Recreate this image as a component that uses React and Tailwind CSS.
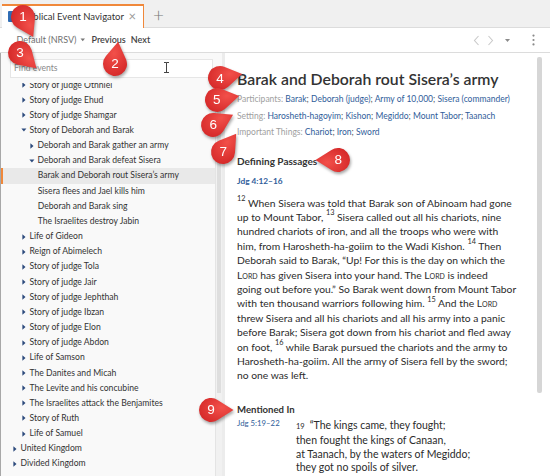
import React from "react";

const tree = [
  { t: "Story of judge Othniel", lvl: 1, a: "r" },
  { t: "Story of judge Ehud", lvl: 1, a: "r" },
  { t: "Story of judge Shamgar", lvl: 1, a: "r" },
  { t: "Story of Deborah and Barak", lvl: 1, a: "d" },
  { t: "Deborah and Barak gather an army", lvl: 2, a: "r" },
  { t: "Deborah and Barak defeat Sisera", lvl: 2, a: "d" },
  { t: "Barak and Deborah rout Sisera’s army", lvl: 3, sel: true },
  { t: "Sisera flees and Jael kills him", lvl: 3 },
  { t: "Deborah and Barak sing", lvl: 3 },
  { t: "The Israelites destroy Jabin", lvl: 3 },
  { t: "Life of Gideon", lvl: 1, a: "r" },
  { t: "Reign of Abimelech", lvl: 1, a: "r" },
  { t: "Story of judge Tola", lvl: 1, a: "r" },
  { t: "Story of judge Jair", lvl: 1, a: "r" },
  { t: "Story of judge Jephthah", lvl: 1, a: "r" },
  { t: "Story of judge Ibzan", lvl: 1, a: "r" },
  { t: "Story of judge Elon", lvl: 1, a: "r" },
  { t: "Story of judge Abdon", lvl: 1, a: "r" },
  { t: "Life of Samson", lvl: 1, a: "r" },
  { t: "The Danites and Micah", lvl: 1, a: "r" },
  { t: "The Levite and his concubine", lvl: 1, a: "r" },
  { t: "The Israelites attack the Benjamites", lvl: 1, a: "r" },
  { t: "Story of Ruth", lvl: 1, a: "r" },
  { t: "Life of Samuel", lvl: 1, a: "r" },
  { t: "United Kingdom", lvl: 0, a: "r" },
  { t: "Divided Kingdom", lvl: 0, a: "r" },
];

const indent = ["pl-[12px]", "pl-[21px]", "pl-[29px]", "pl-[36.7px]"];

const pins = [
  { n: 1, pos: "left-[-3px] top-[-9.5px]", rot: 153 },
  { n: 2, pos: "left-[89px] top-[38px]", rot: 8 },
  { n: 3, pos: "left-[-6px] top-[27px]", rot: 133 },
  { n: 4, pos: "left-[194px] top-[52.3px]", rot: 80 },
  { n: 5, pos: "left-[190.7px] top-[74px]", rot: 80 },
  { n: 6, pos: "left-[187.3px] top-[99px]", rot: 63 },
  { n: 7, pos: "left-[197.3px] top-[125.7px]", rot: 36 },
  { n: 8, pos: "left-[312.3px] top-[134px]", rot: 270 },
  { n: 9, pos: "left-[185px] top-[384px]", rot: 90 },
];

function Arrow({ dir }) {
  if (dir === "d")
    return (
      <svg width="6" height="4" viewBox="0 0 6 4" className="-ml-[1px]">
        <path d="M0.4 0.4 L5.4 0.4 L2.9 3.5z" fill="#2c4a7c" />
      </svg>
    );
  return (
    <svg width="4" height="6" viewBox="0 0 4 6">
      <path d="M0.4 0.3 L3.5 3 L0.4 5.7z" fill="#2c4a7c" />
    </svg>
  );
}

function Pin({ n, pos, rot }) {
  return (
    <div className={`absolute ${pos} w-[52px] h-[52px] drop-shadow-[1px_2px_1.5px_rgba(0,0,0,0.35)]`}>
      <svg width="52" height="52" viewBox="0 0 52 52">
        <defs>
          <radialGradient id={`pg${n}`} cx="0.4" cy="0.35" r="0.7">
            <stop offset="0" stopColor="#f2504a" />
            <stop offset="1" stopColor="#d62a2a" />
          </radialGradient>
        </defs>
        <g transform={`translate(26 26) rotate(${rot})`}>
          <path d="M0 -22.5 L10.06 -6.55 A12 12 0 1 1 -10.06 -6.55 Z" fill={`url(#pg${n})`} />
        </g>
      </svg>
      <span className="absolute inset-0 flex items-center justify-center text-white text-[13.5px] font-['Liberation_Sans',sans-serif] leading-none">
        {n}
      </span>
    </div>
  );
}

const Lord = () => <span className="[font-variant-caps:small-caps]">Lord</span>;
const V = ({ n }) => (
  <sup className="text-[7.3px] relative -top-[1px] align-super leading-none">{n}</sup>
);

const body = [
  <><V n="12" /> When Sisera was told that Barak son of Abinoam had gone</>,
  <>up to Mount Tabor, <V n="13" /> Sisera called out all his chariots, nine</>,
  <>hundred chariots of iron, and all the troops who were with</>,
  <>him, from Harosheth-ha-goiim to the Wadi Kishon. <V n="14" /> Then</>,
  <>Deborah said to Barak, “Up! For this is the day on which the</>,
  <><Lord /> has given Sisera into your hand. The <Lord /> is indeed</>,
  <>going out before you.” So Barak went down from Mount Tabor</>,
  <>with ten thousand warriors following him. <V n="15" /> And the <Lord /></>,
  <>threw Sisera and all his chariots and all his army into a panic</>,
  <>before Barak; Sisera got down from his chariot and fled away</>,
  <>on foot, <V n="16" /> while Barak pursued the chariots and the army to</>,
  <>Harosheth-ha-goiim. All the army of Sisera fell by the sword;</>,
  <>no one was left.</>,
];

function Meta({ label, items }) {
  return (
    <div className="text-[8.5px] leading-[16.7px] whitespace-nowrap">
      <span className="text-[#a0a0a0]">{label}: </span>
      {items.map((it, i) => (
        <span key={it}>
          <span className="text-[#2f5d9a]">{it}</span>
          {i < items.length - 1 && <span className="text-[#555]">; </span>}
        </span>
      ))}
    </div>
  );
}

export default function App() {
  return (
    <div className="relative w-[550px] h-[476px] overflow-hidden bg-white font-['Lato',sans-serif] text-[#333]">
      {/* tab strip */}
      <div className="flex items-end h-[28px] bg-[#f0f0f0] border-b border-[#dcdcdc]">
        <div className="flex items-center h-[24.5px] w-[142px] ml-[2px] -mb-px bg-white border-t-2 border-[#f0883a] border-r border-[#dcdcdc]">
          <div className="w-[10px] h-[11px] ml-[6px] mr-[7px] bg-[#2f6db5] rounded-[1px]" />
          <span className="text-[9.5px] text-[#333] whitespace-nowrap">Biblical Event Navigator</span>
          <span className="ml-auto mr-[7px] text-[13px] text-[#9a9a9a] leading-none">×</span>
        </div>
        <div className="h-[24.5px] flex items-center pl-[9px] text-[#777] text-[19px] font-light leading-none">+</div>
      </div>

      {/* toolbar */}
      <div className="flex items-center h-[25px] border-b border-[#dcdcdc] text-[9px]">
        <span className="ml-[16.5px] text-[#707070]">Default (NRSV)</span>
        <svg width="6" height="4" viewBox="0 0 6 4" className="ml-[3px]">
          <path d="M0.5 0.5 L5 0.5 L2.75 3.2z" fill="#777" />
        </svg>
        <span className="ml-[6px] text-[#444] font-semibold">Previous</span>
        <span className="ml-[5px] text-[#444] font-semibold">Next</span>
        <div className="ml-auto flex items-center">
          <svg width="7" height="11" viewBox="0 0 7 11">
            <path d="M5.5 1 L1.5 5.5 L5.5 10" stroke="#c9c9c9" strokeWidth="1.1" fill="none" />
          </svg>
          <svg width="7" height="11" viewBox="0 0 7 11" className="ml-[7px]">
            <path d="M1.5 1 L5.5 5.5 L1.5 10" stroke="#c9c9c9" strokeWidth="1.1" fill="none" />
          </svg>
          <svg width="5" height="3" viewBox="0 0 5 3" className="ml-[11px]">
            <path d="M0 0 L5 0 L2.5 3z" fill="#8a8a8a" />
          </svg>
          <svg width="3" height="12" viewBox="0 0 3 12" className="ml-[22px] mr-[15px]">
            <circle cx="1.5" cy="1.6" r="1.1" fill="#8a8a8a" />
            <circle cx="1.5" cy="6" r="1.1" fill="#8a8a8a" />
            <circle cx="1.5" cy="10.4" r="1.1" fill="#8a8a8a" />
          </svg>
        </div>
      </div>

      <div className="flex h-[423px]">
        {/* left tree panel */}
        <div className="flex flex-col w-[222px] bg-[#f9f9f9] border-l border-[#a8a8a8]">
          <div className="relative mt-[6px] ml-[9px] mr-[9px] h-[19px] bg-white border border-[#e6e6e6] flex items-center pl-[3px] text-[8.6px] text-[#8a8a8a]">
            Find events
            <svg width="7" height="11" viewBox="0 0 7 11" className="absolute left-[152px] top-[2px]">
              <path d="M1 0.5 H3.5 H6 M3.5 0.5 V10.5 M1 10.5 H6" stroke="#444" strokeWidth="1" fill="none" />
            </svg>
          </div>
          <div className="flex flex-1 mt-[4.5px] min-h-0">
            <div className="flex-1 overflow-hidden">
              <div className="-mt-[5.1px]">
                {tree.map((r) => (
                  <div
                    key={r.t}
                    className={`relative flex items-center h-[15.16px] whitespace-nowrap text-[8.6px] text-[#333] ${indent[r.lvl]} ${r.sel ? "bg-[#e9e9e9]" : ""}`}
                  >
                    {r.sel && <div className="absolute -left-[1px] top-0 bottom-0 w-[3px] bg-[#f0883a]" />}
                    {r.a && (
                      <span className="w-[7.5px] flex items-center">
                        <Arrow dir={r.a} />
                      </span>
                    )}
                    <span>{r.t}</span>
                  </div>
                ))}
              </div>
            </div>
            <div className="w-[7px] bg-[#f1f1f1] border-l border-[#e4e4e4]">
              <div className="h-[310px] mx-[1px] bg-[#dedede]" />
            </div>
          </div>
        </div>
        <div className="w-[3px] bg-[#ececec]" />

        {/* content */}
        <div className="flex flex-1 min-w-0">
          <div className="flex-1 pl-[12px] pt-[15px]">
            <div className="text-[15.8px] leading-[22px] font-semibold text-[#333] whitespace-nowrap">
              Barak and Deborah rout Sisera’s army
            </div>
            <div className="mt-[1px]">
              <Meta label="Participants" items={["Barak", "Deborah (judge)", "Army of 10,000", "Sisera (commander)"]} />
              <Meta label="Setting" items={["Harosheth-hagoyim", "Kishon", "Megiddo", "Mount Tabor", "Taanach"]} />
              <Meta label="Important Things" items={["Chariot", "Iron", "Sword"]} />
            </div>
            <div className="mt-[12px] text-[10px] leading-[16px] font-bold text-[#333]">Defining Passages</div>
            <div className="mt-[5px] text-[8.3px] leading-[14px] font-bold text-[#2f5d9a]">Jdg 4:12–16</div>
            <div className="mt-[7.4px] text-[10.3px] leading-[14.4px] text-[#2b2b2b] whitespace-nowrap">
              {body.map((l, i) => (
                <div key={i}>{l}</div>
              ))}
            </div>
            <div className="mt-[20.4px] text-[9.6px] leading-[14px] font-bold text-[#333]">Mentioned In</div>
            <div className="mt-[2.2px] grid grid-cols-[59px_1fr]">
              <div className="-mt-[3px] text-[7.8px] leading-[14px] text-[#2f5d9a]">Jdg 5:19–22</div>
              <div className="text-[10.5px] leading-[13.67px] text-[#2b2b2b] whitespace-nowrap">
                <div>
                  <span className="text-[7.5px] mr-[5px]">19</span>“The kings came, they fought;
                </div>
                <div>then fought the kings of Canaan,</div>
                <div>at Taanach, by the waters of Megiddo;</div>
                <div>they got no spoils of silver.</div>
              </div>
            </div>
          </div>
          <div className="w-[13px] pt-[4px]">
            <div className="w-[5px] h-[336px] bg-[#d6d6d6] rounded-[2px]" />
          </div>
        </div>
      </div>

      {pins.map((p) => (
        <Pin key={p.n} {...p} />
      ))}
    </div>
  );
}
